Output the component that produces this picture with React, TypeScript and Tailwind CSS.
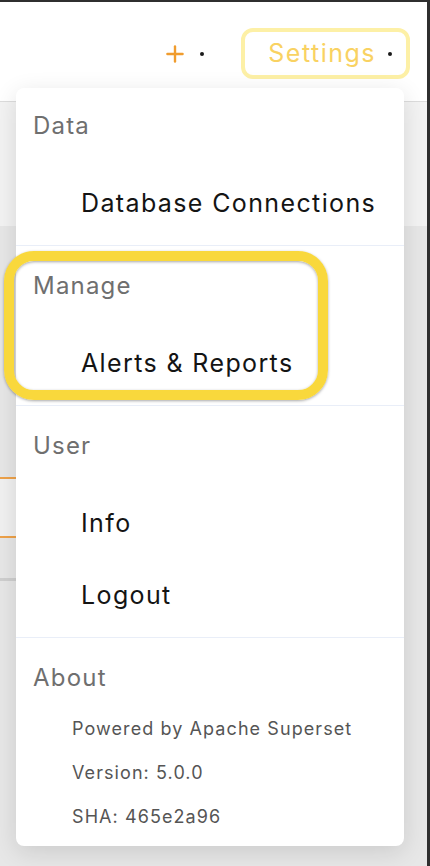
import { Plus } from "lucide-react";

const font = { fontFamily: "Inter, 'Noto Sans', sans-serif" };

function Section({
  label,
  items,
  first,
}: {
  label: string;
  items: string[];
  first?: boolean;
}) {
  return (
    <div className={`${first ? "pt-[10px]" : "pt-[12px]"} pb-[5px] border-b border-[#e9eef8]`}>
      <div className="h-[56px] flex items-center pl-[17px] text-[24px] tracking-[0.05em] text-[#6f6f6f]">{label}</div>
      <div className="pt-[14px]">
        {items.map((it) => (
          <div key={it} className="h-[72px] flex items-center pl-[65px] text-[25px] tracking-[0.055em] text-[#141414]">
            {it}
          </div>
        ))}
      </div>
    </div>
  );
}

export default function App() {
  return (
    <div
      className="relative w-[430px] h-[866px] overflow-hidden bg-[#e7e7e7] border-t-2 border-r-[3px] border-[#2f2f2f]"
      style={font}
    >
      {/* header */}
      <header className="h-[100px] bg-white flex items-center justify-end pr-[17px] pt-[4px] shadow-[0_6px_14px_rgba(0,0,0,0.06)] border-b border-[#dcdcdc]">
        <div className="flex items-center gap-[12px] mr-[37px]">
          <Plus className="w-[26px] h-[26px] text-[#f09c2e]" strokeWidth={2.2} />
          <span className="w-[4px] h-[4px] rounded-full bg-[#1a1a1a]" />
        </div>
        <div className="h-[51px] w-[169px] border-4 border-[#fdf0a6] rounded-[12px] flex items-center justify-end pr-[14px] gap-[12px]">
          <span className="text-[25px] tracking-[0.06em] text-[#f9d262]">Settings</span>
          <span className="w-[4px] h-[4px] rounded-full bg-[#1a1a1a]" />
        </div>
      </header>

      {/* page behind the menu */}
      <div className="h-[124px] bg-[#f3f3f3]" />
      <div className="h-[251px]" />
      <div className="h-[61px] w-[200px] bg-[#f1f1f1] border-y-2 border-[#eea24a]" />
      <div className="h-[40px]" />
      <div className="h-[3px] w-[200px] bg-[#cfcfcf]" />

      {/* dropdown menu */}
      <div className="absolute left-[16px] top-[86px] w-[388px] bg-white rounded-[8px] shadow-[0_6px_24px_rgba(0,0,0,0.12)]">
        <Section first label="Data" items={["Database Connections"]} />
        <Section label="Manage" items={["Alerts & Reports"]} />
        <Section label="User" items={["Info", "Logout"]} />
        <div className="pt-[12px] pb-[8px]">
          <div className="h-[56px] flex items-center pl-[17px] text-[24px] tracking-[0.05em] text-[#6f6f6f]">About</div>
          {["Powered by Apache Superset", "Version: 5.0.0", "SHA: 465e2a96"].map((t) => (
            <div key={t} className="h-[44px] flex items-center pl-[56px] text-[18px] tracking-[0.06em] text-[#555555]">
              {t}
            </div>
          ))}
        </div>
      </div>

      {/* highlight around Manage */}
      <div className="absolute left-[4px] top-[249px] w-[324px] h-[149px] rounded-[30px] border-[10px] border-[#f9d83c] shadow-[0_1px_3px_rgba(0,0,0,0.35),inset_0_1px_3px_rgba(0,0,0,0.35)]" />
    </div>
  );
}
